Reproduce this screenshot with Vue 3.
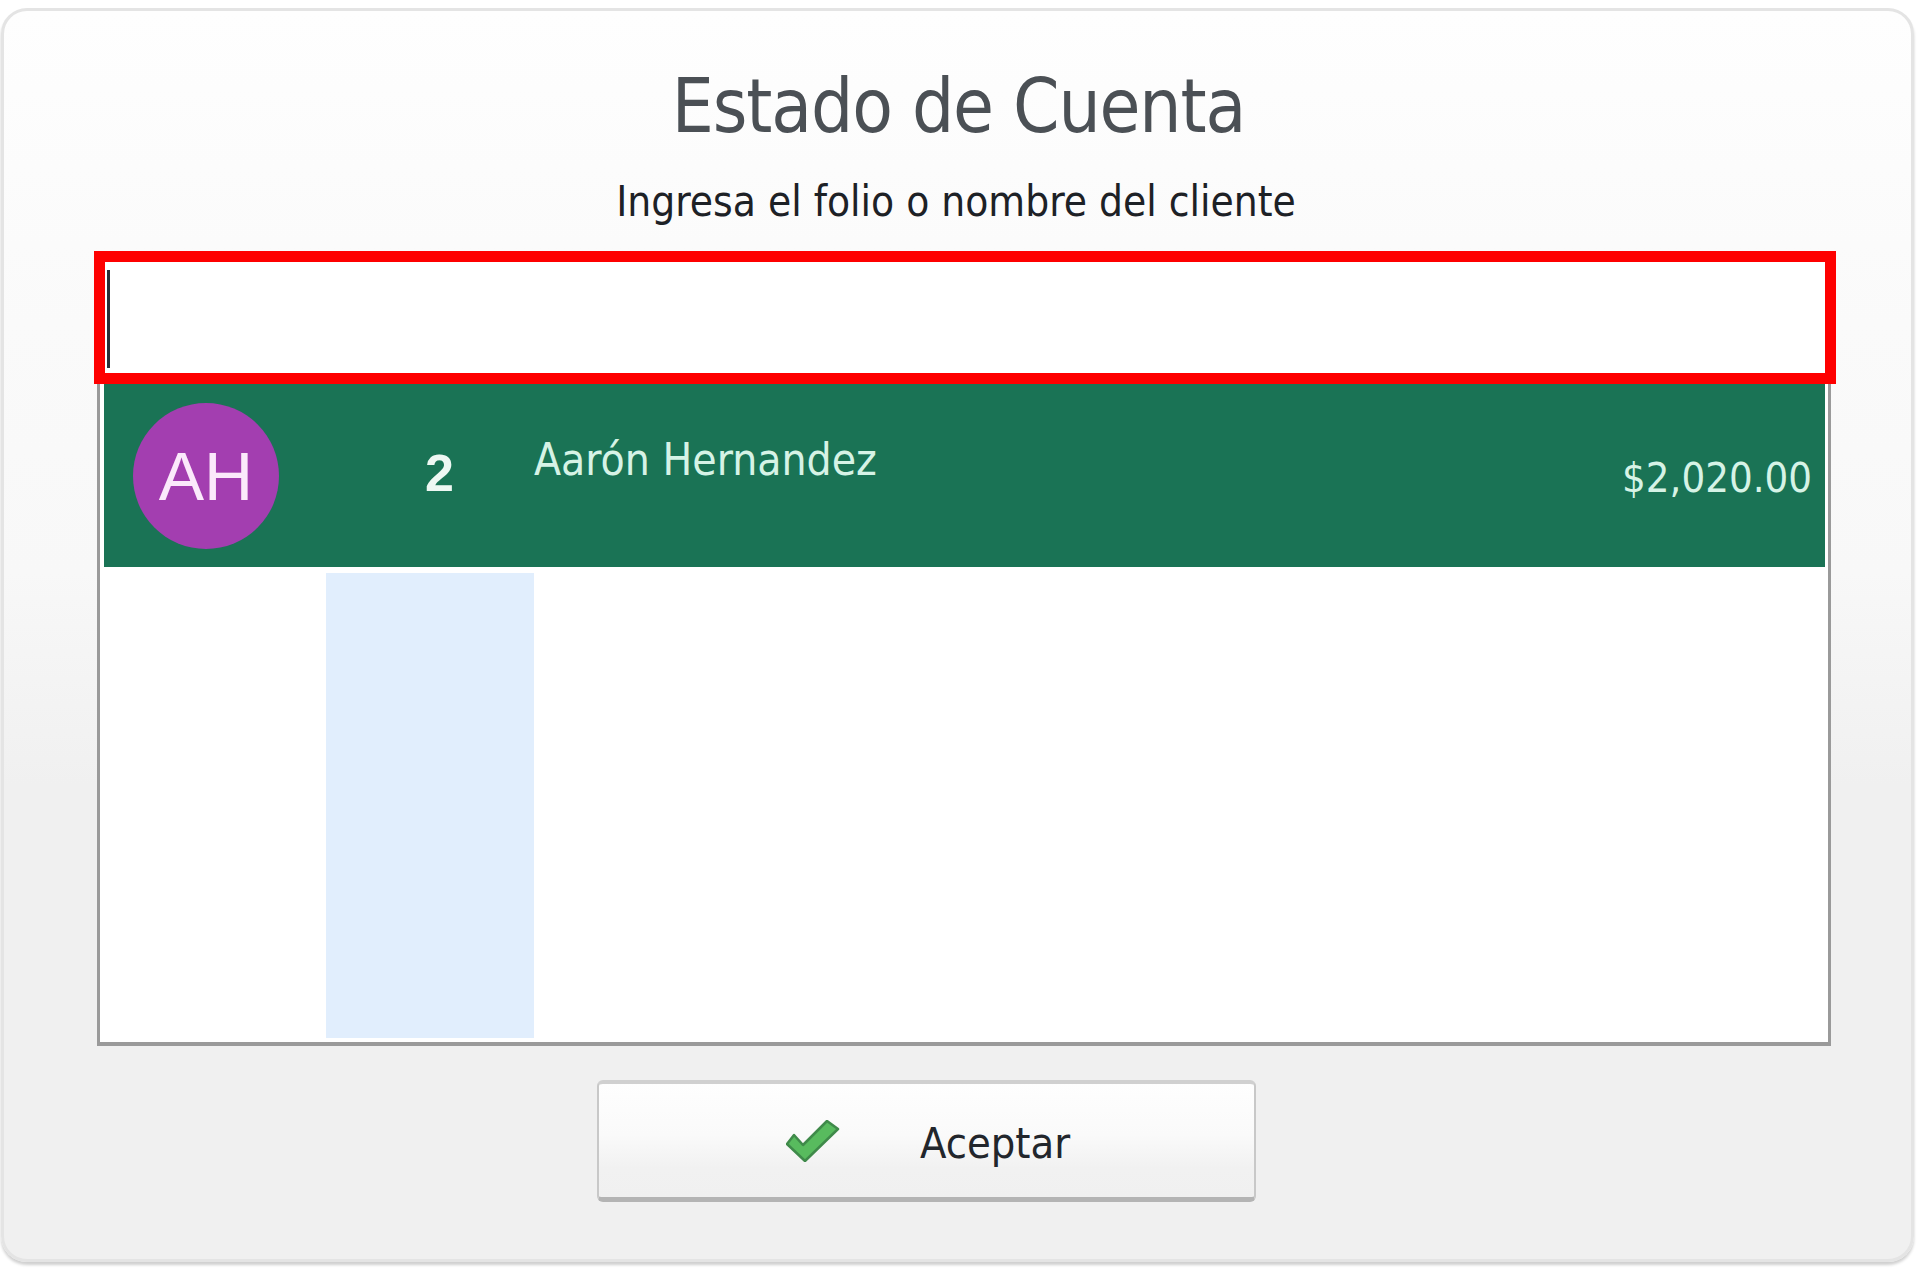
<template>
  <div class="page">
    <section class="window">
      <h1 class="title">Estado de Cuenta</h1>
      <p class="hint">Ingresa el folio o nombre del cliente</p>

      <div class="search"><span class="caret"></span></div>

      <div class="list">
        <div v-for="c in clientes" :key="c.folio" class="row">
          <div class="avatar">{{ c.iniciales }}</div>
          <div class="folio">{{ c.folio }}</div>
          <div class="name">{{ c.nombre }}</div>
          <div class="amount">{{ c.saldo }}</div>
        </div>
        <div class="filler"><div class="folio-col"></div></div>
      </div>

      <div class="actions">
        <button class="btn" type="button">
          <svg class="check" viewBox="0 0 54 42" width="54" height="42">
            <path d="M1 24 L8 15 L17 25 L41 1 L52 9 L19 41 Z" fill="#58bb5e" stroke="#3f8a4a" stroke-width="2.5" stroke-linejoin="round" />
          </svg>
          <span class="label">Aceptar</span>
        </button>
      </div>
    </section>
  </div>
</template>

<script setup>
const clientes = [
  { iniciales: 'AH', folio: 2, nombre: 'Aarón Hernandez', saldo: '$2,020.00' }
]
</script>

<style>
html,
body {
  background: #fff;
}
</style>

<style scoped>
.page {
  height: 1271px;
  padding: 8px 6px 9px 1px;
  box-sizing: border-box;
  display: flex;
  font-family: "DejaVu Sans", sans-serif;
  font-stretch: condensed;
}
.window {
  flex: 1;
  box-sizing: border-box;
  border: 3px solid #e4e4e4;
  border-radius: 26px;
  padding: 0 75px 0 90px;
  display: flex;
  flex-direction: column;
  background: linear-gradient(#fefefe 0, #fafafa 25%, #f8f8f8 45%, #f0f0f0 62%, #f0f0f0 100%);
  box-shadow: 0 3px 3px #d0d0d0;
}
.title {
  margin: 50px 0 0;
  padding-right: 13px;
  font-size: 74px;
  letter-spacing: -1.1px;
  line-height: 90px;
  font-weight: 400;
  text-align: center;
  color: #4b5055;
}
.hint {
  margin: 26px 0 0;
  padding-right: 18px;
  font-size: 42px;
  line-height: 50px;
  text-align: center;
  color: #1d2126;
}
.search {
  margin-top: 24px;
  height: 133px;
  box-sizing: border-box;
  border: 11px solid #fe0000;
  background: #fff;
  padding: 8px 0 5px 2px;
  display: flex;
  flex-shrink: 0;
}
.caret {
  width: 3px;
  background: #2a2f38;
}
.list {
  margin: 0 5px 0 3px;
  height: 662px;
  box-sizing: border-box;
  flex-shrink: 0;
  border: 3px solid #9a9a9a;
  border-top: 0;
  border-bottom-width: 4px;
  padding: 0 3px 4px 4px;
  background: #fff;
  display: flex;
  flex-direction: column;
}
.row {
  height: 183px;
  flex-shrink: 0;
  background: #1a7355;
  color: #d6f3e6;
  display: grid;
  grid-template-columns: 222px 208px 1fr auto;
  position: relative;
}
.avatar {
  margin: 19px 0 0 29px;
  width: 146px;
  height: 146px;
  border-radius: 50%;
  background: #a33eb0;
  color: #fbe9fb;
  font-family: "Liberation Sans", sans-serif;
  font-size: 68px;
  line-height: 146px;
  text-align: center;
}
.folio {
  padding: 59px 80px 0 0;
  font-family: "Liberation Sans", sans-serif;
  font-weight: 700;
  font-size: 52px;
  line-height: 60px;
  text-align: right;
  color: #eef8f3;
}
.name {
  padding-top: 51px;
  font-size: 44px;
  line-height: 50px;
}
.amount {
  padding: 69px 13px 0 0;
  font-size: 41.5px;
  line-height: 50px;
}
.filler {
  flex: 1;
  margin-top: 6px;
  padding-left: 222px;
  display: flex;
}
.folio-col {
  width: 208px;
  background: #e1eefd;
}
.actions {
  margin-top: 34px;
  padding-left: 503px;
}
.btn {
  width: 659px;
  height: 122px;
  box-sizing: border-box;
  border: 2px solid #c8c8c8;
  border-top: 4px solid #d0d0d0;
  border-bottom: 5px solid #b4b4b4;
  border-radius: 6px;
  background: linear-gradient(#fefefe, #fafafa 45%, #f1f1f1 75%, #f0f0f0);
  padding: 0 0 0 187px;
  display: flex;
  align-items: center;
  gap: 80px;
  font-family: inherit;
  font-stretch: condensed;
  font-size: 43px;
  color: #22262c;
}
.check {
  flex-shrink: 0;
}
.label {
  padding-top: 4px;
}
</style>
